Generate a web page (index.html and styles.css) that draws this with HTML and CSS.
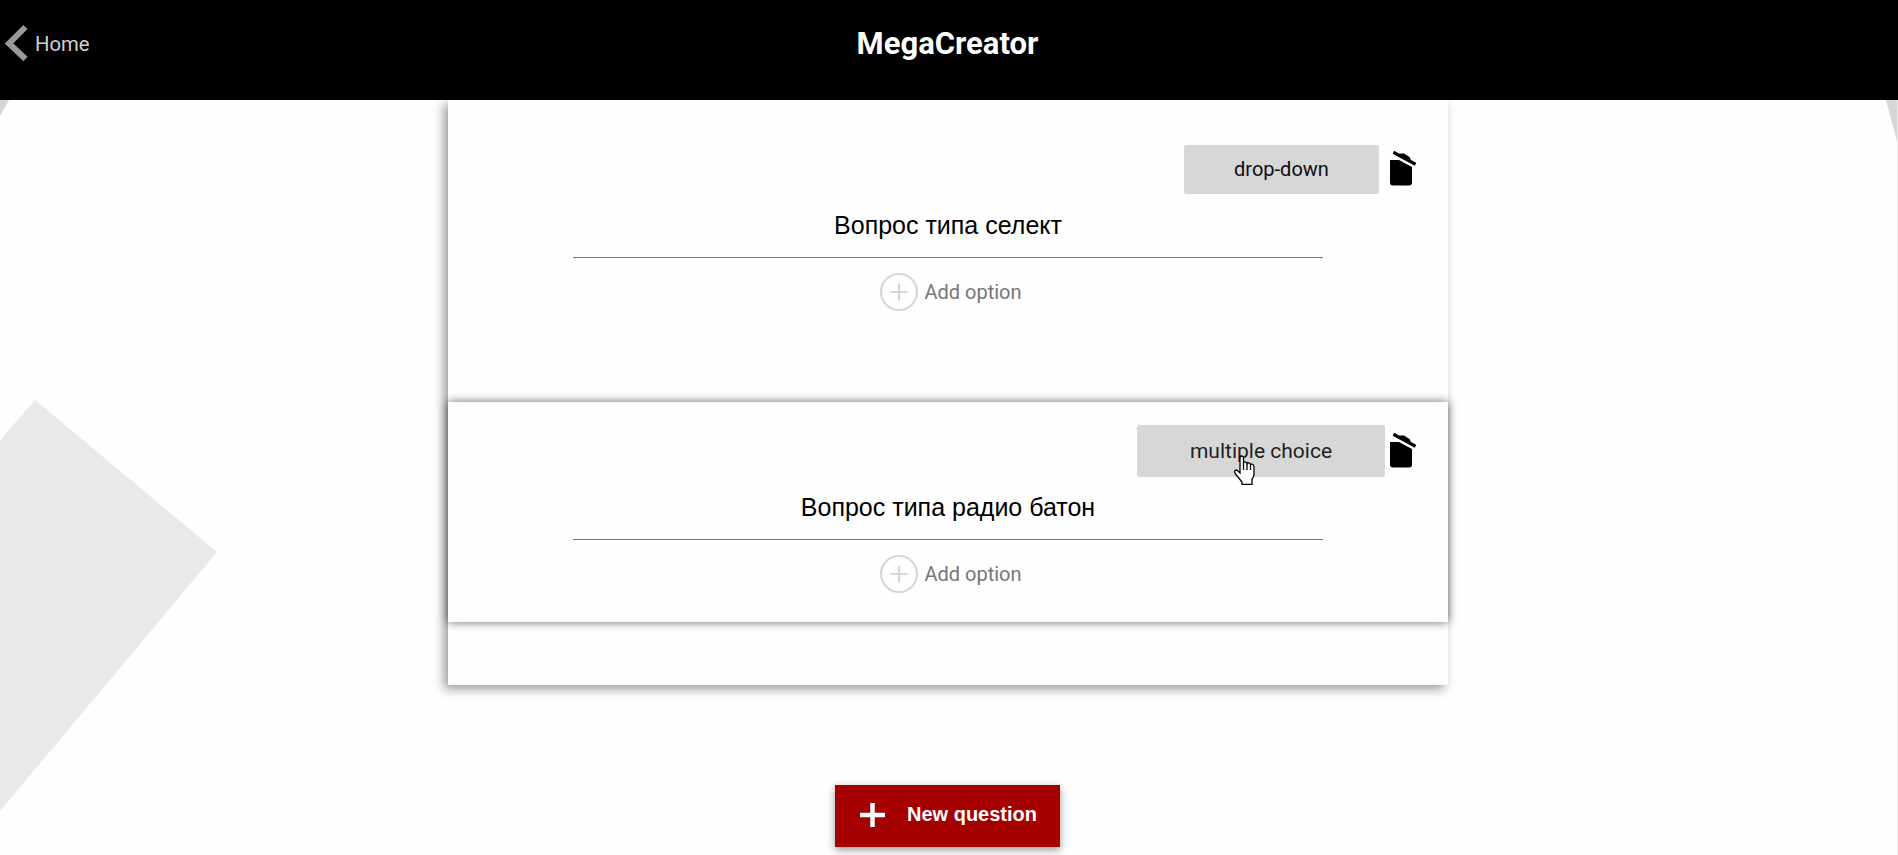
FILE: index.html
```html
<!DOCTYPE html>
<html lang="ru">
<head>
<meta charset="utf-8">
<title>MegaCreator</title>
<link rel="stylesheet" href="styles.css">
</head>
<body>
<svg class="backdrop" viewBox="0 0 1898 855" aria-hidden="true">
  <path d="M0 100H9L0 116Z" fill="#d6d6d6"/>
  <path d="M1886 100H1897V141Z" fill="#d6d6d6"/>
  <path d="M0 440.500 35 400 217 552 0 811Z" fill="#e9e9ea"/>
  <path d="M1897 100h1v755h-1z" fill="#ececec"/>
</svg>
<header class="header">
  <a class="home">
    <svg class="home-icon" width="24" height="38" viewBox="0 0 24 38"><path d="M20.500 3 4 19.500 20.500 35" fill="none" stroke="#999" stroke-width="6"/></svg>
    <span>Home</span>
  </a>
  <h1 class="brand">MegaCreator</h1>
</header>
<main class="main">
  <section class="survey">
    <article class="question">
      <div class="toolbar">
        <button class="type">drop-down</button>
        <svg class="trash" width="28" height="38" viewBox="0 0 28 38"><path d="M1 10H10L23 17V32.500Q23 35.500 20 35.500H4Q1 35.500 1 32.500Z"/><path d="M5.200 .8 10 3.500H15L20.500 7 22 10 27.300 12.800 25.800 15.800 3.700 3.700Z"/></svg>
      </div>
      <div class="title">Вопрос типа селект</div>
      <div class="option">
        <svg width="38" height="38" viewBox="0 0 38 38"><circle cx="19" cy="19" r="18" /><path d="M19 10.500v17M10.500 19h17"/></svg>
        <span>Add option</span>
      </div>
    </article>
    <article class="question active">
      <div class="toolbar">
        <button class="type hovered">multiple choice
          <svg class="pointer" width="23" height="30" viewBox="0 0 23 30"><path d="M7 18V3Q7 1 8.700 1T10.500 3V8Q11 6.800 12.300 6.800T14 8.500Q14.500 7.500 15.800 7.800T17.500 9.500Q18 8.800 19.200 9.200T21 11.500V19Q21 22 19 24V29.500H9V27L2.500 19Q.8 16.500 2.200 15.400T5.500 16.500Z"/><path d="M10.500 8v7M14 8.500v6.500M17.500 9.500v5.500"/></svg>
        </button>
        <svg class="trash" width="28" height="38" viewBox="0 0 28 38"><path d="M1 10H10L23 17V32.500Q23 35.500 20 35.500H4Q1 35.500 1 32.500Z"/><path d="M5.200 .8 10 3.500H15L20.500 7 22 10 27.300 12.800 25.800 15.800 3.700 3.700Z"/></svg>
      </div>
      <div class="title">Вопрос типа радио батон</div>
      <div class="option">
        <svg width="38" height="38" viewBox="0 0 38 38"><circle cx="19" cy="19" r="18" /><path d="M19 10.500v17M10.500 19h17"/></svg>
        <span>Add option</span>
      </div>
    </article>
  </section>
  <button class="new">
    <svg width="25" height="24" viewBox="0 0 25 24"><path d="M12.500 0v24M0 12h25" stroke="#fff" stroke-width="4.500"/></svg>
    <span>New question</span>
  </button>
</main>
</body>
</html>
```
FILE: styles.css
```css
* { box-sizing: border-box; }
body {
  margin: 0;
  height: 855px;
  overflow: hidden;
  background: #fefefe;
  font-family: Roboto, sans-serif;
}
button { border: 0; padding: 0; font-family: inherit; }
.backdrop {
  position: absolute;
  top: 0;
  left: 0;
  width: 1898px;
  height: 855px;
  z-index: -1;
}
.header {
  position: relative;
  z-index: 2;
  display: grid;
  grid-template-columns: 1fr auto 1fr;
  height: 100px;
  padding-right: 3px;
  background: #000;
}
.home {
  display: flex;
  align-items: center;
  height: 38px;
  margin-top: 24px;
  padding-left: 5px;
  gap: 6px;
  color: #d0d0d0;
  font-size: 20.3px;
}
.home span { padding-top: 2px; }
.brand {
  margin: 26px 0 0;
  height: 36px;
  line-height: 36px;
  font-size: 31px;
  font-weight: 700;
  color: #fff;
}
.main {
  display: flex;
  flex-direction: column;
  align-items: center;
  gap: 100px;
  padding-right: 2px;
}
.survey {
  width: 1000px;
  height: 585px;
  background: #fefefe;
  box-shadow: -4px 4px 10px rgba(0, 0, 0, .4);
}
.question {
  display: flex;
  flex-direction: column;
  align-items: center;
  height: 302px;
  padding-top: 45px;
}
.active {
  height: 220px;
  padding-top: 23px;
  box-shadow: 0 0 9px rgba(0, 0, 0, .6);
}
.toolbar {
  display: flex;
  align-items: center;
  justify-content: flex-end;
  align-self: stretch;
  gap: 10px;
  padding-right: 31px;
}
.type {
  position: relative;
  width: 195px;
  height: 49px;
  padding-bottom: 2px;
  border-radius: 2px;
  background: #d7d7d7;
  color: #0c0c10;
  font-size: 20px;
}
.trash { margin-bottom: 2px; }
.hovered {
  width: 248px;
  height: 52px;
  padding-bottom: 0;
  margin-right: -6px;
  font-size: 21px;
  color: #222;
}
.active .trash { margin-bottom: 0; }
.pointer {
  position: absolute;
  left: 96px;
  top: 30px;
  fill: #fff;
  stroke: #000;
  stroke-width: 1.3;
}
.title {
  width: 750px;
  height: 64px;
  padding-top: 17px;
  border-bottom: 1px solid #777;
  line-height: 28px;
  text-align: center;
  font-family: "Liberation Sans", Arial, sans-serif;
  font-size: 25px;
  color: #000;
}
.active .title {
  height: 63px;
  padding-top: 16px;
}
.option {
  display: flex;
  align-items: center;
  gap: 6px;
  margin-top: 15px;
  padding-left: 6px;
  font-size: 20px;
  color: #777;
}
.option svg {
  fill: none;
  stroke: #d7d7d7;
  stroke-width: 2.2;
}
.new {
  display: flex;
  align-items: center;
  width: 225px;
  height: 62px;
  margin-right: 1px;
  padding: 0 0 3px 25px;
  gap: 22px;
  background: #a40000;
  color: #fff;
  font: bold 20px "Liberation Sans", Arial, sans-serif;
  box-shadow: 0 3px 8px rgba(0, 0, 0, .4);
}
```
